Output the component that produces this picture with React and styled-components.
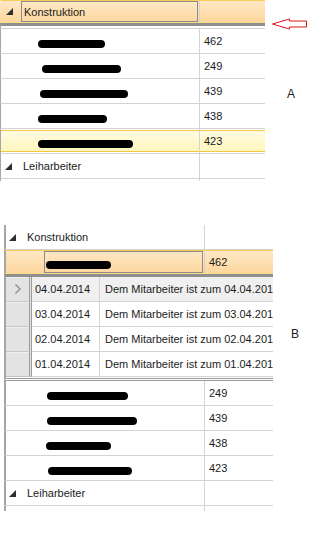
import styled, { createGlobalStyle } from 'styled-components';

const GlobalStyle = createGlobalStyle`
  html, body {
    margin: 0;
    padding: 0;
    background: #ffffff;
  }
  body {
    font-family: 'Liberation Sans', Arial, sans-serif;
    font-size: 11px;
    color: #1b1b1b;
  }
`;

const LINE = '#d3d3d3';
const EDGE = '#a6a6a6';

// grid variants: left edge width, first column width, toggle indent
const gridA = { edge: 1, col: 199, indent: 4 };
const gridB = { edge: 2, col: 199, indent: 3 };

const rowsA = [
  { id: 1, value: 462, x: 37, w: 67 },
  { id: 2, value: 249, x: 41, w: 79 },
  { id: 3, value: 439, x: 39, w: 88 },
  { id: 4, value: 438, x: 37, w: 69 },
  { id: 5, value: 423, x: 37, w: 95, selected: true },
];

const rowsB = [
  { id: 2, value: 249, x: 41, w: 81 },
  { id: 3, value: 439, x: 41, w: 90 },
  { id: 4, value: 438, x: 40, w: 65 },
  { id: 5, value: 423, x: 42, w: 84 },
];

const details = [
  { id: 1, date: '04.04.2014', current: true },
  { id: 2, date: '03.04.2014' },
  { id: 3, date: '02.04.2014' },
  { id: 4, date: '01.04.2014' },
];

const Page = styled.div`
  display: flex;
  flex-direction: column;
  width: 335px;
  height: 547px;
  overflow: hidden;
`;

const Section = styled.div`
  display: flex;
  align-items: flex-start;
  margin-top: ${(p) => p.$top || 0}px;
  padding-left: ${(p) => p.$indent || 0}px;
`;

const Grid = styled.div`
  display: flex;
  flex-direction: column;
  width: ${(p) => p.$width}px;
  flex-shrink: 0;
  overflow: hidden;
`;

const Row = styled.div`
  display: grid;
  grid-template-columns: ${(p) => p.$v.col}px 1fr;
  height: ${(p) => p.$h || 25}px;
  box-sizing: border-box;
  border-left: ${(p) => p.$v.edge}px solid ${EDGE};
  border-bottom: 1px solid ${LINE};

  ${(p) =>
    p.$state === 'focused' &&
    `
    background: linear-gradient(180deg, #fee8c5 0%, #fdd79d 100%);
    border-top: 1px solid #f7cd58;
    border-bottom: 1px solid #f9dc86;
  `}

  ${(p) =>
    p.$state === 'selected' &&
    `
    background: linear-gradient(180deg, #fffce4 0%, #fff5ba 100%);
    box-shadow: inset 0 1px 0 #ffffff, inset 0 2px 0 #f5c743,
      inset 0 -1px 0 #ffffff, inset 0 -2px 0 #f5c743;
  `}

  ${(p) => p.$bare && `border-left-color: transparent;`}
`;

const StubRow = styled.div`
  display: grid;
  grid-template-columns: ${(p) => p.$v.col}px 1fr;
  height: ${(p) => p.$h}px;
  border-left: ${(p) => p.$v.edge}px solid ${EDGE};
`;

const NameCell = styled.div`
  display: flex;
  align-items: center;
  min-width: 0;
  border-right: 1px solid ${LINE};
  padding-left: ${(p) => p.$indent || 0}px;
`;

const ValueCell = styled.div`
  display: flex;
  align-items: center;
  padding-left: 4px;
`;

const ToggleSlot = styled.span`
  display: flex;
  align-items: center;
  width: 15px;
  flex-shrink: 0;
`;

const Label = styled.span`
  padding-left: 3px;
  white-space: nowrap;
`;

const FocusBox = styled.div`
  display: flex;
  align-items: center;
  align-self: stretch;
  flex: 1;
  margin: ${(p) => p.$m || '0 1px 0 0'};
  border: 1px solid #8b8b8b;
  padding-left: 2px;
`;

const Blot = styled.span`
  display: block;
  width: ${(p) => p.$w}px;
  height: 8px;
  margin-left: ${(p) => p.$x}px;
  margin-top: 5px;
  background: #000000;
  border-radius: 4px;
`;

const DetailHost = styled.div`
  border-left: ${(p) => p.$v.edge}px solid ${EDGE};
  border-top: 3px solid #8f8f8f;
  padding-bottom: ${(p) => (p.$open ? 1 : 2)}px;
  border-bottom: ${(p) => (p.$open ? `3px double #9a9a9a` : `1px solid ${LINE}`)};
`;

const DetailRow = styled.div`
  display: grid;
  grid-template-columns: 26px 68px 1fr;
  height: 25px;
`;

const RowHeader = styled.div`
  display: flex;
  align-items: center;
  justify-content: center;
  box-sizing: border-box;
  background: #e3e3e3;
  border-bottom: 1px solid #c6c6c6;
  box-shadow: inset 0 1px 0 #efefef;
  border-right: 3px double #9c9c9c;
`;

const DetailCell = styled.div`
  display: flex;
  align-items: center;
  min-width: 0;
  overflow: hidden;
  white-space: nowrap;
  padding-left: ${(p) => p.$pad}px;
  background: ${(p) => (p.$current ? '#f0f0f0' : '#ffffff')};
  border-bottom: 1px solid ${LINE};
  border-right: ${(p) => (p.$divider ? `1px solid ${LINE}` : 'none')};
`;

const Aside = styled.div`
  display: flex;
  flex-direction: column;
  align-items: flex-start;
`;

const ArrowMark = styled.svg`
  display: block;
  margin: 18px 0 0 7px;
`;

const Marker = styled.span`
  display: block;
  font-size: 12px;
  line-height: 14px;
  color: #202020;
  margin: ${(p) => p.$m};
`;

const Toggle = () => (
  <svg width="7" height="7" viewBox="0 0 7 7">
    <polygon points="7,0 7,7 0,7" fill="#2e2e2e" />
  </svg>
);

const Chevron = () => (
  <svg width="8" height="12" viewBox="0 0 8 12">
    <polyline points="1.5,1.5 6,6 1.5,10.5" fill="none" stroke="#8c8c8c" strokeWidth="1.3" />
  </svg>
);

const GroupRow = ({ v, label, focused }) => (
  <Row $v={v} $state={focused ? 'focused' : undefined} $bare={focused} $h={focused ? 23 : 25}>
    <NameCell $indent={v.indent + (focused ? v.edge : 0)}>
      <ToggleSlot>
        <Toggle />
      </ToggleSlot>
      {focused ? (
        <FocusBox $m="0 1px 0 0">
          <span>{label}</span>
        </FocusBox>
      ) : (
        <Label>{label}</Label>
      )}
    </NameCell>
    <ValueCell />
  </Row>
);

const DataRow = ({ v, row }) => (
  <Row $v={v} $state={row.selected ? 'selected' : undefined}>
    <NameCell>
      <Blot $x={row.x} $w={row.w} />
    </NameCell>
    <ValueCell>{row.value}</ValueCell>
  </Row>
);

const Details = ({ v }) => (
  <DetailHost $v={v} $open>
    {details.map((d) => (
      <DetailRow key={d.id}>
        <RowHeader>{d.current && <Chevron />}</RowHeader>
        <DetailCell $pad={3} $current={d.current} $divider>
          {d.date}
        </DetailCell>
        <DetailCell $pad={5} $current={d.current}>
          Dem Mitarbeiter ist zum {d.date}
        </DetailCell>
      </DetailRow>
    ))}
  </DetailHost>
);

export default function App() {
  return (
    <>
      <GlobalStyle />
      <Page>
        <Section>
          <Grid $width={265}>
            <GroupRow v={gridA} label="Konstruktion" focused />
            <DetailHost $v={gridA} />
            {rowsA.map((row) => (
              <DataRow key={row.id} v={gridA} row={row} />
            ))}
            <GroupRow v={gridA} label="Leiharbeiter" />
            <StubRow $v={gridA} $h={2}>
              <NameCell />
            </StubRow>
          </Grid>
          <Aside>
            <ArrowMark width="36" height="12" viewBox="0 0 36 12">
              <polygon
                points="0.5,6 17.5,1 17.5,3 34.5,3 34.5,9 17.5,9 17.5,11"
                fill="#ffffff"
                stroke="#e0141b"
                strokeWidth="1"
              />
            </ArrowMark>
            <Marker $m="57px 0 0 22px">A</Marker>
          </Aside>
        </Section>

        <Section $top={44} $indent={4}>
          <Grid $width={269}>
            <GroupRow v={gridB} label="Konstruktion" />
            <Row $v={gridB} $state="focused" $h={24}>
              <NameCell>
                <FocusBox $m="0 1px 0 38px">
                  <Blot $x={-1} $w={65} />
                </FocusBox>
              </NameCell>
              <ValueCell>462</ValueCell>
            </Row>
            <Details v={gridB} />
            {rowsB.map((row) => (
              <DataRow key={row.id} v={gridB} row={row} />
            ))}
            <GroupRow v={gridB} label="Leiharbeiter" />
            <StubRow $v={gridB} $h={5}>
              <NameCell />
            </StubRow>
          </Grid>
          <Aside>
            <Marker $m="102px 0 0 18px">B</Marker>
          </Aside>
        </Section>
      </Page>
    </>
  );
}
